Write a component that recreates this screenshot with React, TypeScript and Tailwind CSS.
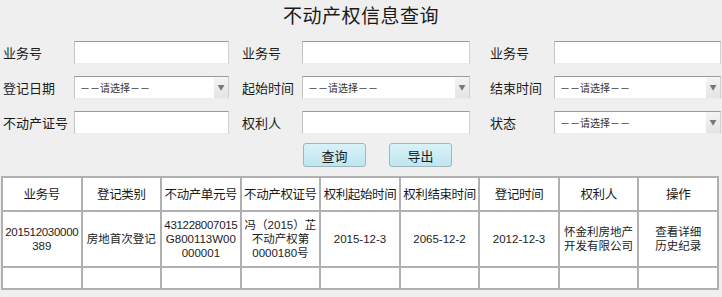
import React from "react";

const FONT = { fontFamily: '"Noto Sans CJK SC", "Noto Sans", sans-serif' };
const CELL_FONT = { fontFamily: '"Liberation Sans", "Noto Sans CJK SC", sans-serif' };

function TextBox({ w }: { w: string }) {
  return (
    <div
      className={`${w} h-[23px] bg-white border border-t-[#9a9a9a] border-l-[#c4c4c4] border-r-[#d0d0d0] border-b-[#ececec]`}
    />
  );
}

function SelectBox({ w }: { w: string }) {
  return (
    <div
      className={`${w} h-[23px] bg-white flex items-center border border-t-[#9a9a9a] border-l-[#c4c4c4] border-r-[#d0d0d0] border-b-[#ececec]`}
    >
      <span className="flex-1 pl-[5px] text-[10px] text-[#333] leading-none">－－请选择－－</span>
      <span className="w-[14px] h-full bg-gradient-to-b from-[#f4f4f4] to-[#e4e4e4] flex items-center justify-center text-[7px] text-[#777]">
        ▼
      </span>
    </div>
  );
}

function Label({ text, w }: { text: string; w: string }) {
  return <span className={`${w} shrink-0 text-[13px] text-[#1a1a1a] leading-none`}>{text}</span>;
}

const headers = ["业务号", "登记类别", "不动产单元号", "不动产权证号", "权利起始时间", "权利结束时间", "登记时间", "权利人", "操作"];

const row = [
  ["201512030000", "389"],
  ["房地首次登记"],
  ["431228007015", "G800113W00", "000001"],
  ["冯（2015）芷", "不动产权第", "0000180号"],
  ["2015-12-3"],
  ["2065-12-2"],
  ["2012-12-3"],
  ["怀金利房地产", "开发有限公司"],
  ["查看详细", "历史纪录"],
];

export default function App() {
  return (
    <div className="w-[722px] h-[297px] bg-[#efefef] overflow-hidden text-[#1a1a1a]" style={FONT}>
      <div className="h-[30px] flex items-center justify-center text-[19px] tracking-[0.5px]">不动产权信息查询</div>

      <div className="mt-[11px] flex flex-col gap-[12px]">
        <div className="flex items-center">
          <Label text="业务号" w="w-[74px] pl-[3px]" />
          <TextBox w="w-[155px]" />
          <Label text="业务号" w="w-[73px] pl-[13px]" />
          <TextBox w="w-[168px]" />
          <Label text="业务号" w="w-[84px] pl-[20px]" />
          <TextBox w="w-[167px]" />
        </div>
        <div className="flex items-center">
          <Label text="登记日期" w="w-[74px] pl-[3px]" />
          <SelectBox w="w-[155px]" />
          <Label text="起始时间" w="w-[73px] pl-[13px]" />
          <SelectBox w="w-[168px]" />
          <Label text="结束时间" w="w-[84px] pl-[20px]" />
          <SelectBox w="w-[167px]" />
        </div>
        <div className="flex items-center">
          <Label text="不动产证号" w="w-[74px] pl-[3px]" />
          <TextBox w="w-[155px]" />
          <Label text="权利人" w="w-[73px] pl-[13px]" />
          <TextBox w="w-[168px]" />
          <Label text="状态" w="w-[84px] pl-[20px]" />
          <SelectBox w="w-[167px]" />
        </div>
      </div>

      <div className="mt-[9px] flex gap-[23px] pl-[303px]">
        {["查询", "导出"].map((t) => (
          <button
            key={t}
            className="w-[63px] h-[24px] rounded-[3px] border border-[#9fb6bd] bg-gradient-to-b from-[#d9f2f8] to-[#bfe6ef] text-[13px] text-[#1a1a1a] leading-none"
          >
            {t}
          </button>
        ))}
      </div>

      <table className="mt-[9px] ml-px w-[718px] table-fixed border-collapse bg-white border-2 border-[#b0b0b0]">
        <tbody>
          <tr className="h-[34px]">
            {headers.map((h) => (
              <td key={h} className="border-2 border-[#b0b0b0] text-center text-[12.5px] whitespace-nowrap px-0 tracking-[-0.4px]">
                {h}
              </td>
            ))}
          </tr>
          <tr className="h-[56px]">
            {row.map((lines, i) => (
              <td
                key={i}
                className="border-2 border-[#b0b0b0] text-center text-[11.5px] leading-[14px] px-0 text-[#222] whitespace-nowrap"
                style={CELL_FONT}
              >
                {lines.map((l) => (
                  <div key={l} className={l.length > 10 && /^[0-9A-Z]+$/.test(l) ? "tracking-[-0.3px]" : ""}>
                    {l}
                  </div>
                ))}
              </td>
            ))}
          </tr>
          <tr className="h-[22px]">
            {headers.map((h) => (
              <td key={h} className="border-2 border-[#b0b0b0]" />
            ))}
          </tr>
        </tbody>
      </table>
    </div>
  );
}
